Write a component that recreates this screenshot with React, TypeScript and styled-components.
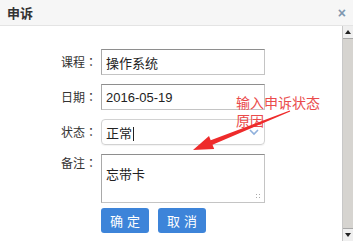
import React from "react";
import styled, { createGlobalStyle } from "styled-components";

const GlobalStyle = createGlobalStyle`
  html, body {
    margin: 0;
    padding: 0;
    background: #fff;
  }
  body {
    font-family: "Liberation Sans", "Noto Sans CJK SC", sans-serif;
  }
`;

const Dialog = styled.div`
  position: relative;
  width: 353px;
  height: 241px;
  overflow: hidden;
  background: #fff;
  display: flex;
  flex-direction: column;
`;

const Header = styled.div`
  height: 25px;
  flex: none;
  display: flex;
  align-items: center;
  justify-content: space-between;
  padding: 0 7px;
  background: #f6f6f6;
  border-bottom: 1px solid #e4e4e4;
`;

const Title = styled.span`
  font-size: 13px;
  font-weight: bold;
  color: #333;
`;

const Close = styled.span`
  font-size: 14px;
  color: #7f97b0;
  font-weight: bold;
  line-height: 1;
`;

const Body = styled.div`
  flex: 1;
  display: flex;
  min-height: 0;
`;

const Content = styled.div`
  flex: 1;
  padding: 23px 0 0 57px;
`;

const Form = styled.div`
  display: grid;
  grid-template-columns: 40px 164px;
  column-gap: 4px;
  row-gap: 9px;
  align-items: start;
`;

const Label = styled.label<{ $top?: number }>`
  font-family: "Noto Sans CJK SC", sans-serif;
  font-size: 12px;
  color: #333;
  text-align: right;
  white-space: nowrap;
  line-height: 26px;
  margin-top: ${(p) => p.$top ?? 0}px;
`;

const Colon = styled.span`
  font-family: "Noto Sans CJK JP", sans-serif;
`;

const Input = styled.div`
  box-sizing: border-box;
  height: 26px;
  border: 1px solid #c4c4c4;
  border-top-color: #8e8e8e;
  border-left-color: #a9a9a9;
  padding: 0 4px;
  display: flex;
  align-items: center;
  font-size: 13px;
  color: #222;
`;

const Select = styled(Input)`
  border: 1px solid #d2d2d2;
  border-radius: 4px;
  justify-content: space-between;
  padding-right: 5px;
  box-shadow: 0 1px 1px rgba(0, 0, 0, 0.05);
`;

const Caret = styled.span`
  display: inline-block;
  width: 1px;
  height: 14px;
  background: #222;
  margin-left: 1px;
  vertical-align: middle;
`;

const TextArea = styled(Input)`
  position: relative;
  height: 49px;
  align-items: flex-start;
  padding-top: 9px;
`;

const Grip = styled.span`
  position: absolute;
  right: 2px;
  bottom: 2px;
  width: 7px;
  height: 7px;
  background-image: radial-gradient(#aaa 0.7px, transparent 0.8px);
  background-size: 3px 3px;
`;

const Buttons = styled.div`
  grid-column: 2;
  display: flex;
  gap: 9px;
  margin-top: -4px;
`;

const Button = styled.button`
  width: 48px;
  height: 25px;
  border: none;
  border-radius: 3px;
  background: #3d84d9;
  color: #fff;
  font-family: "Noto Sans CJK SC", sans-serif;
  font-size: 13px;
  letter-spacing: 4px;
  text-indent: 4px;
  padding: 0;
`;

const Scrollbar = styled.div`
  width: 10px;
  flex: none;
  display: flex;
  flex-direction: column;
  background: #dcdcdc;
  border-left: 1px solid #c8c8c8;
`;

const ScrollButton = styled.div`
  height: 12px;
  background: #efefef;
  display: flex;
  align-items: center;
  justify-content: center;
`;

const Thumb = styled.div`
  flex: 1;
  background: #d6d4d0;
  border-top: 1px solid #a8a8a8;
  border-bottom: 1px solid #a8a8a8;
`;

const Note = styled.div`
  position: absolute;
  left: 236px;
  top: 93px;
  width: 100px;
  font-family: "Noto Sans CJK SC", sans-serif;
  font-size: 14px;
  line-height: 18px;
  color: #ea4b4b;
`;

const Arrow = styled.svg`
  position: absolute;
  left: 185px;
  top: 105px;
  pointer-events: none;
`;

const Tri = ({ up }: { up?: boolean }) => (
  <svg width="6" height="4" viewBox="0 0 6 4">
    <polygon points={up ? "0,4 6,4 3,0" : "0,0 6,0 3,4"} fill="#222" />
  </svg>
);

export default function App() {
  return (
    <>
      <GlobalStyle />
      <Dialog>
        <Header>
          <Title>申诉</Title>
          <Close>×</Close>
        </Header>
        <Body>
          <Content>
            <Form>
              <Label>
                课程<Colon>：</Colon>
              </Label>
              <Input>操作系统</Input>
              <Label>
                日期<Colon>：</Colon>
              </Label>
              <Input>2016-05-19</Input>
              <Label>
                状态<Colon>：</Colon>
              </Label>
              <Select>
                <span>
                  正常
                  <Caret />
                </span>
                <svg width="10" height="7" viewBox="0 0 10 7">
                  <polyline points="1,1 5,5 9,1" fill="none" stroke="#8fb0dc" strokeWidth="1.6" />
                </svg>
              </Select>
              <Label $top={-4}>
                备注<Colon>：</Colon>
              </Label>
              <TextArea>
                忘带卡
                <Grip />
              </TextArea>
              <Buttons>
                <Button>确定</Button>
                <Button>取消</Button>
              </Buttons>
            </Form>
          </Content>
          <Scrollbar>
            <ScrollButton>
              <Tri up />
            </ScrollButton>
            <Thumb />
            <ScrollButton>
              <Tri />
            </ScrollButton>
          </Scrollbar>
        </Body>
        <Note>
          输入申诉状态
          <br />
          原因
        </Note>
        <Arrow width="110" height="50" viewBox="0 0 110 50">
          <polygon
            points="8,45 29.2,44 27.5,39.8 105.2,6.5 104.8,5.5 25.7,35.2 24,31"
            fill="#ee2b2b"
          />
        </Arrow>
      </Dialog>
    </>
  );
}
